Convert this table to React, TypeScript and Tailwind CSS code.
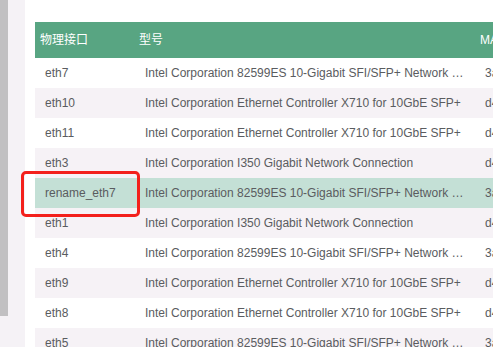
import React from 'react';

type Port = { name: string; model: string; mac: string };

const M82599 = 'Intel Corporation 82599ES 10-Gigabit SFI/SFP+ Network Connection';
const MX710 = 'Intel Corporation Ethernet Controller X710 for 10GbE SFP+';
const MI350 = 'Intel Corporation I350 Gigabit Network Connection';

const PORTS: Port[] = [
  { name: 'eth7', model: M82599, mac: '3a:5e:0c:11:7f:02' },
  { name: 'eth10', model: MX710, mac: 'd4:ae:52:90:13:6a' },
  { name: 'eth11', model: MX710, mac: 'd4:ae:52:90:13:6b' },
  { name: 'eth3', model: MI350, mac: 'd4:ae:52:8c:40:03' },
  { name: 'rename_eth7', model: M82599, mac: '3a:5e:0c:11:7f:03' },
  { name: 'eth1', model: MI350, mac: 'd4:ae:52:8c:40:01' },
  { name: 'eth4', model: M82599, mac: '3a:5e:0c:11:7f:04' },
  { name: 'eth9', model: MX710, mac: 'd4:ae:52:90:13:69' },
  { name: 'eth8', model: MX710, mac: 'd4:ae:52:90:13:68' },
  { name: 'eth5', model: M82599, mac: '3a:5e:0c:11:7f:05' },
];

const SELECTED = 'rename_eth7';

export default function App() {
  return (
    <div
      className="flex h-[347px] w-[493px] overflow-hidden bg-[#f5f2f6] text-[12px]"
      style={{ fontFamily: '"Liberation Sans", Arial, "Noto Sans CJK SC", sans-serif' }}
    >
      {/* scrollbar of the side list */}
      <div className="w-[8px] shrink-0">
        <div className="h-[316px] bg-[#c1c0c2]" />
      </div>
      <div className="w-[17px] shrink-0" />

      <div className="flex-1 bg-white pl-[10px] pt-[22px]">
        <div className="w-[700px]">
          <div className="flex h-[36px] items-center bg-[#58a582] text-white">
            <div className="w-[100px] shrink-0 pl-[5px]">物理接口</div>
            <div className="w-[340px] shrink-0 pl-[4px]">型号</div>
            <div className="flex-1 pl-[5px]">MAC地址</div>
          </div>

          {PORTS.map((p, i) => {
            const selected = p.name === SELECTED;
            return (
              <div
                key={p.name}
                className={`flex h-[30px] text-[#5a5c60] ${
                  selected ? 'bg-[#c4e0d6]' : i % 2 === 1 ? 'bg-[#f6f2f6]' : 'bg-white'
                }`}
              >
                <div className="relative flex w-[100px] shrink-0 items-center px-[10px]">
                  {p.name}
                  {selected && (
                    <div className="pointer-events-none absolute left-[-14px] top-[-7px] h-[46px] w-[119px] rounded-[5px] border-[3px] border-[#f3201c]" />
                  )}
                </div>
                <div className="flex w-[340px] shrink-0 items-center px-[10px]">
                  <span className="truncate">{p.model}</span>
                </div>
                <div className="flex flex-1 items-center px-[10px]">{p.mac}</div>
              </div>
            );
          })}
        </div>
      </div>
    </div>
  );
}
